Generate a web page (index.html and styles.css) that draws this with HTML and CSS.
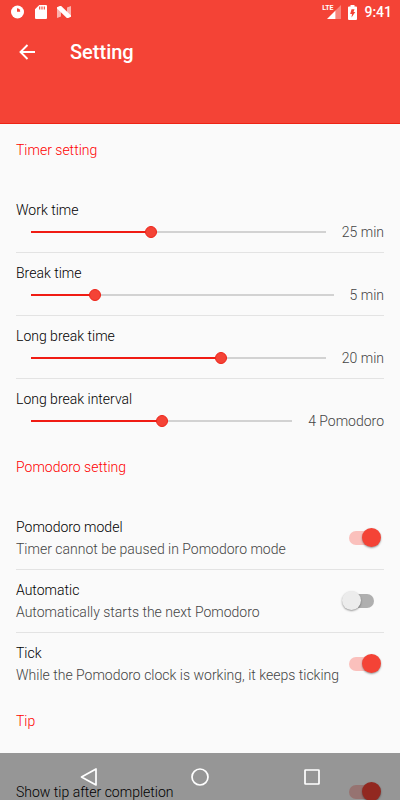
FILE: index.html
```html
<!DOCTYPE html>
<html lang="en">
<head>
<meta charset="utf-8">
<meta name="viewport" content="width=device-width, initial-scale=1">
<title>Setting</title>
<link rel="stylesheet" href="styles.css">
</head>
<body>
<div class="app">
  <header class="header">
    <div class="status">
      <div class="notices">
        <svg width="14" height="14" viewBox="0 0 14 14" aria-hidden="true"><circle cx="6.500" cy="7" r="6.500" fill="#fff"/><path d="M6 3.200v3.500h3.200A3.200 3.200 0 0 0 6 3.200z" fill="#f44336"/></svg>
        <svg width="12" height="14" viewBox="0 0 12 14" aria-hidden="true"><path d="M4.300 0H11a1 1 0 0 1 1 1v12a1 1 0 0 1-1 1H1a1 1 0 0 1-1-1V4.300z" fill="#fff"/><path d="M4.700 1.600v3M7 1.600v3M9.300 1.600v3" stroke="#f44336" stroke-width="1.100"/></svg>
        <svg width="14" height="12" viewBox="0 0 14 12" aria-hidden="true"><path d="M0 1.200 4 5v5.500L0 12zM14 0v10.800L10 7V1.500z" fill="#fff" opacity=".6"/><path d="M0 1.200 2.800 0h1.400L14 9.500v1.300L11.200 12H9.800L0 2.600z" fill="#fff"/></svg>
      </div>
      <div class="system">
        <span class="signal">
          <span class="lte">LTE</span>
          <svg width="14" height="14" viewBox="0 0 14 14" aria-hidden="true"><path d="M14 0v14H8.500V5.500z" fill="#fff" opacity=".35"/><path d="M8.500 5.500V14H0z" fill="#fff"/></svg>
        </span>
        <svg width="9" height="15" viewBox="0 0 9 15" aria-hidden="true"><path d="M2.500 0h4v1.500H8a1 1 0 0 1 1 1V14a1 1 0 0 1-1 1H1a1 1 0 0 1-1-1V2.500a1 1 0 0 1 1-1h1.500z" fill="#fff"/><path d="M3.500 4.200h3L5.500 7h1.800l-3.800 5.500L4 9H2.200z" fill="#f44336"/></svg>
        <span class="time">9:41</span>
      </div>
    </div>
    <div class="toolbar">
      <button class="back" type="button" aria-label="Back"><svg width="16" height="16" viewBox="0 0 16 16" fill="none" stroke="#fff" stroke-width="1.900"><path d="M16 8H1.500M8.500 1 1.500 8l7 7"/></svg></button>
      <h1 class="title">Setting</h1>
    </div>
  </header>
  <main class="content">
    <section>
      <h2 class="heading">Timer setting</h2>
      <div class="row">
        <label class="name" for="work">Work time</label>
        <div class="control"><input class="slider" id="work" type="range" min="1" max="60" value="25" style="--fill:24/59"><output class="value" for="work">25 min</output></div>
      </div>
      <div class="row">
        <label class="name" for="break">Break time</label>
        <div class="control"><input class="slider" id="break" type="range" min="1" max="20" value="5" style="--fill:4/19"><output class="value" for="break">5 min</output></div>
      </div>
      <div class="row">
        <label class="name" for="long">Long break time</label>
        <div class="control"><input class="slider" id="long" type="range" min="2" max="30" value="20" style="--fill:18/28"><output class="value" for="long">20 min</output></div>
      </div>
      <div class="row">
        <label class="name" for="interval">Long break interval</label>
        <div class="control"><input class="slider" id="interval" type="range" min="2" max="6" value="4" style="--fill:2/4"><output class="value" for="interval">4 Pomodoro</output></div>
      </div>
    </section>
    <section>
      <h2 class="heading">Pomodoro setting</h2>
      <div class="row row-switch">
        <label class="text" for="model"><span class="name">Pomodoro model</span><span class="summary">Timer cannot be paused in Pomodoro mode</span></label>
        <input class="switch" id="model" type="checkbox" role="switch" checked>
      </div>
      <div class="row row-switch">
        <label class="text" for="auto"><span class="name">Automatic</span><span class="summary">Automatically starts the next Pomodoro</span></label>
        <input class="switch" id="auto" type="checkbox" role="switch">
      </div>
      <div class="row row-switch">
        <label class="text" for="tick"><span class="name">Tick</span><span class="summary">While the Pomodoro clock is working, it keeps ticking</span></label>
        <input class="switch" id="tick" type="checkbox" role="switch" checked>
      </div>
    </section>
    <section>
      <h2 class="heading">Tip</h2>
      <div class="row row-switch">
        <label class="text" for="tip"><span class="name">Show tip after completion</span></label>
        <input class="switch" id="tip" type="checkbox" role="switch" checked>
      </div>
    </section>
  </main>
  <nav class="navbar" aria-label="System">
    <button type="button" aria-label="Back"><svg width="18" height="20" viewBox="0 0 18 20"><path d="M16 2v16L1.500 10z"/></svg></button>
    <button type="button" aria-label="Home"><svg width="18" height="20" viewBox="0 0 18 20"><circle cx="9" cy="10" r="8"/></svg></button>
    <button type="button" aria-label="Recent apps"><svg width="18" height="20" viewBox="0 0 18 20"><rect x="2" y="3" width="14" height="14" rx=".5"/></svg></button>
  </nav>
</div>
</body>
</html>
```
FILE: styles.css
```css
* { box-sizing: border-box; }

body {
  margin: 0;
  background: #fafafa;
  color: #000;
  font: 300 14px/22px Roboto, "Liberation Sans", sans-serif;
}

button {
  padding: 0;
  border: 0;
  background: none;
}

svg { display: block; }

.app {
  display: flex;
  flex-direction: column;
  height: 100vh;
}

.header {
  flex: none;
  padding-bottom: 44px;
  border-bottom: 1px solid #ee2415;
  background: #f44336;
  color: #fff;
}

.status {
  display: flex;
  align-items: center;
  justify-content: space-between;
  height: 24px;
  padding: 0 8px 0 11px;
}

.notices {
  display: flex;
  align-items: center;
  gap: 10px;
}

.system {
  display: flex;
  align-items: center;
  gap: 7px;
}

.signal { position: relative; }

.lte {
  position: absolute;
  top: 0;
  right: 8px;
  font-size: 7px;
  font-weight: 700;
  line-height: 7px;
}

.time {
  font-size: 14px;
  font-weight: 500;
}

.toolbar {
  display: flex;
  align-items: center;
  gap: 35px;
  height: 55px;
  padding: 0 19px;
}

.title {
  margin: 0;
  font-size: 20px;
  font-weight: 500;
}

.content {
  flex: 1;
  min-height: 0;
  padding: 0 16px;
  overflow-y: auto;
  scrollbar-width: none;
}

.heading {
  height: 66px;
  margin: 0;
  padding-top: 15px;
  color: #f00;
  font-size: 14px;
  font-weight: inherit;
}

.row {
  min-height: 62px;
  padding: 9px 0;
}

.row:not(:last-child) { border-bottom: 1px solid #e3e3e3; }

.name { display: block; }

.control {
  display: flex;
  align-items: center;
  gap: 10px;
  padding-left: 9px;
}

.value,
.summary { color: #444; }

.slider {
  appearance: none;
  flex: 1;
  min-width: 0;
  height: 12px;
  margin: 0;
  background: linear-gradient(to right,
    transparent 6px,
    #f01c14 6px calc(6px + (100% - 12px) * var(--fill)),
    #d2d2d2 0 calc(100% - 6px),
    transparent 0) center / 100% 2px no-repeat;
}

.slider::-webkit-slider-thumb {
  appearance: none;
  width: 12px;
  height: 12px;
  border: 1px solid #ee2419;
  border-radius: 50%;
  background: #f44336;
}

.row-switch {
  display: flex;
  align-items: center;
  gap: 4px;
}

.text {
  flex: 1;
  min-width: 0;
}

.summary {
  display: block;
  white-space: nowrap;
}

.switch {
  appearance: none;
  display: flex;
  align-items: center;
  position: relative;
  flex: none;
  width: 39px;
  height: 20px;
  margin: 0 3px 0 0;
}

.switch::before {
  content: "";
  flex: 1;
  height: 14px;
  margin: 0 7px;
  border-radius: 7px;
  background: #afafaf;
}

.switch::after {
  content: "";
  position: absolute;
  top: 0;
  left: 0;
  width: 19px;
  height: 19px;
  border-radius: 50%;
  background: #ececec;
  box-shadow: 0 1px 2px rgba(0, 0, 0, .4);
}

.switch:checked::before { background: #fac0bc; }

.switch:checked::after {
  right: 0;
  left: auto;
  background: #f44336;
}

.navbar {
  display: flex;
  align-items: center;
  justify-content: space-evenly;
  position: fixed;
  right: 0;
  bottom: 0;
  left: 0;
  height: 47px;
  padding: 0 8px;
  background: rgba(0, 0, 0, .4);
}

.navbar button { padding: 0 22px; }

.navbar svg {
  fill: none;
  stroke: #fff;
  stroke-width: 1.7px;
  stroke-linejoin: round;
}
```
